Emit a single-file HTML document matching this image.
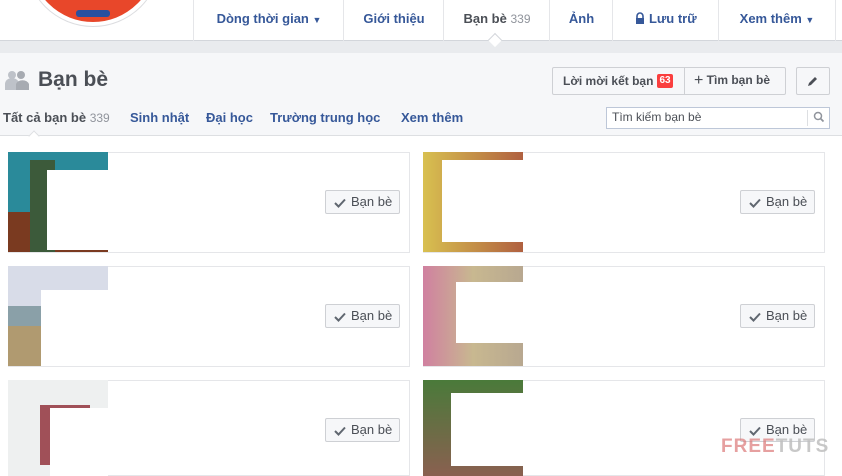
<!DOCTYPE html>
<html><head><meta charset="utf-8"><style>
*{margin:0;padding:0;box-sizing:border-box}
body{width:842px;height:476px;overflow:hidden;background:#fff;font-family:"Liberation Sans",Arial,sans-serif;position:relative}
.a{position:absolute}
.nav{left:0;top:0;width:842px;height:41px;background:#fff;border-bottom:1px solid #d3d6db}
.tab{top:0;height:41px;line-height:38px;font-size:13px;font-weight:bold;color:#365899;text-align:center;border-left:1px solid #e5e6e9}
.band{left:0;top:41px;width:842px;height:12px;background:#e9ebee}
.hdr{left:0;top:53px;width:842px;height:83px;background:#f6f7f9;border-bottom:1px solid #dddfe2}
.sub{top:110px;font-size:13px;font-weight:bold;color:#365899}
.card{width:402px;height:101px;border:1px solid #e5e6e9;background:#fff}
.btn{width:75px;height:24px;border:1px solid #ced0d4;border-radius:2px;background:#f6f7f9;font-size:13px;color:#4b4f56;line-height:22px;padding-left:25px}
.btn svg{position:absolute;left:8px;top:7px}
</style></head><body>
<div class="a nav"></div>
<div class="a" style="left:26px;top:-108px;width:134px;height:134px;border-radius:50%;background:#e8472a;border:4px solid #fff;box-shadow:0 0 0 1px #dcdde0"></div>
<div class="a" style="left:76px;top:10px;width:34px;height:7px;background:#2850a0;border-radius:3px"></div>
<div class="a tab" style="left:193px;width:151px">Dòng thời gian <span style="font-size:9px">▼</span></div>
<div class="a tab" style="left:343px;width:101px">Giới thiệu</div>
<div class="a tab" style="left:443px;width:107px;color:#4b4f56">Bạn bè <span style="font-weight:normal;color:#90949c;font-size:12px">339</span></div>
<div class="a" style="left:490px;top:35px;width:10px;height:10px;background:#fff;border-left:1px solid #d3d6db;border-top:1px solid #d3d6db;transform:rotate(45deg);z-index:2"></div>
<div class="a tab" style="left:549px;width:64px">Ảnh</div>
<div class="a tab" style="left:612px;width:107px"><svg width="10" height="12" viewBox="0 0 10 12" style="vertical-align:-1px"><path d="M2 6V4a3 3 0 0 1 6 0v2" stroke="#365899" stroke-width="1.6" fill="none"/><rect x="1" y="6" width="8" height="6" fill="#365899"/></svg> Lưu trữ</div>
<div class="a tab" style="left:718px;width:118px;border-right:1px solid #e5e6e9">Xem thêm <span style="font-size:9px">▼</span></div>
<div class="a band"></div>
<div class="a hdr"></div>
<svg class="a" style="left:5px;top:70px" width="24" height="20" viewBox="0 0 24 20"><circle cx="7" cy="5" r="4" fill="#bec2c9"/><path d="M0 20v-6a7 6 0 0 1 14 0v6z" fill="#bec2c9"/><circle cx="16" cy="5" r="4" fill="#a7abb2"/><path d="M11 20v-6a7 6 0 0 1 13 0v6z" fill="#a7abb2"/></svg>
<div class="a" style="left:38px;top:68px;font-size:21px;font-weight:bold;color:#4b4f56">Bạn bè</div>
<div class="a" style="left:552px;top:67px;width:234px;height:28px;border:1px solid #ced0d4;border-radius:2px;background:#f6f7f9"></div>
<div class="a" style="left:684px;top:67px;width:1px;height:28px;background:#ced0d4"></div>
<div class="a" style="left:563px;top:74px;font-size:12px;font-weight:bold;color:#4b4f56">Lời mời kết bạn</div>
<div class="a" style="left:657px;top:74px;width:16px;height:14px;background:#fa3e3e;border-radius:2px;color:#fff;font-size:10px;font-weight:bold;text-align:center;line-height:14px">63</div>
<div class="a" style="left:694px;top:72px;font-size:12px;font-weight:bold;color:#4b4f56"><span style="font-size:16px;font-weight:normal;vertical-align:-1px">+</span> Tìm bạn bè</div>
<div class="a" style="left:796px;top:67px;width:34px;height:28px;border:1px solid #ced0d4;border-radius:2px;background:#f6f7f9"></div>
<svg class="a" style="left:807px;top:75px" width="12" height="12" viewBox="0 0 12 12"><path d="M1 11l1-3 6-6 2 2-6 6z" fill="#4b4f56"/></svg>
<div class="a sub" style="left:3px;color:#4b4f56">Tất cả bạn bè <span style="font-weight:normal;color:#90949c;font-size:12px">339</span></div>
<div class="a" style="left:30px;top:132px;width:8px;height:8px;background:#fff;border-left:1px solid #dddfe2;border-top:1px solid #dddfe2;transform:rotate(45deg)"></div>
<div class="a sub" style="left:130px">Sinh nhật</div>
<div class="a sub" style="left:206px">Đại học</div>
<div class="a sub" style="left:270px">Trường trung học</div>
<div class="a sub" style="left:401px">Xem thêm</div>
<div class="a" style="left:606px;top:107px;width:224px;height:22px;border:1px solid #bdc7d8;background:#fff"></div>
<div class="a" style="left:612px;top:110px;font-size:12px;color:#4b4f56">Tìm kiếm bạn bè</div>
<div class="a" style="left:807px;top:110px;width:1px;height:16px;background:#dddfe2"></div>
<svg class="a" style="left:813px;top:111px" width="12" height="12" viewBox="0 0 12 12"><circle cx="5" cy="5" r="3.5" stroke="#90949c" stroke-width="1.5" fill="none"/><path d="M7.5 7.5l3 3" stroke="#90949c" stroke-width="1.8"/></svg>

<div class="a card" style="left:8px;top:152px"></div>
<div class="a" style="left:8px;top:152px;width:100px;height:100px;background:linear-gradient(#2a8a9a 0 60%,#7a3a20 60%)"></div>
<div class="a" style="left:30px;top:160px;width:25px;height:92px;background:#3c5a3a"></div>
<div class="a" style="left:47px;top:170px;width:61px;height:80px;background:#fff"></div>
<div class="a card" style="left:423px;top:152px"></div>
<div class="a" style="left:423px;top:152px;width:100px;height:100px;background:linear-gradient(90deg,#d8c050,#b06040)"></div>
<div class="a" style="left:442px;top:160px;width:81px;height:82px;background:#fff"></div>

<div class="a card" style="left:8px;top:266px"></div>
<div class="a" style="left:8px;top:266px;width:100px;height:100px;background:linear-gradient(#d8dce8 0 40%,#8aa0a8 40% 60%,#b09a70 60%)"></div>
<div class="a" style="left:41px;top:290px;width:67px;height:76px;background:#fff"></div>
<div class="a card" style="left:423px;top:266px"></div>
<div class="a" style="left:423px;top:266px;width:100px;height:100px;background:linear-gradient(90deg,#d080a0,#c8b890 50%,#b8a890)"></div>
<div class="a" style="left:456px;top:282px;width:67px;height:61px;background:#fff"></div>

<div class="a card" style="left:8px;top:380px;height:96px"></div>
<div class="a" style="left:8px;top:380px;width:100px;height:96px;background:#eef0f0"></div>
<div class="a" style="left:40px;top:405px;width:50px;height:60px;background:#a05058"></div>
<div class="a" style="left:50px;top:408px;width:58px;height:68px;background:#fff"></div>
<div class="a card" style="left:423px;top:380px;height:96px"></div>
<div class="a" style="left:423px;top:380px;width:100px;height:96px;background:linear-gradient(#4a7a3a,#8a6050)"></div>
<div class="a" style="left:451px;top:393px;width:72px;height:73px;background:#fff"></div>

<div class="a btn" style="left:325px;top:190px"><svg width="12" height="10" viewBox="0 0 12 10"><path d="M1 5l3.5 3.5L11 1.5" stroke="#606770" stroke-width="2" fill="none"/></svg>Bạn bè</div>
<div class="a btn" style="left:740px;top:190px"><svg width="12" height="10" viewBox="0 0 12 10"><path d="M1 5l3.5 3.5L11 1.5" stroke="#606770" stroke-width="2" fill="none"/></svg>Bạn bè</div>
<div class="a btn" style="left:325px;top:304px"><svg width="12" height="10" viewBox="0 0 12 10"><path d="M1 5l3.5 3.5L11 1.5" stroke="#606770" stroke-width="2" fill="none"/></svg>Bạn bè</div>
<div class="a btn" style="left:740px;top:304px"><svg width="12" height="10" viewBox="0 0 12 10"><path d="M1 5l3.5 3.5L11 1.5" stroke="#606770" stroke-width="2" fill="none"/></svg>Bạn bè</div>
<div class="a btn" style="left:325px;top:418px"><svg width="12" height="10" viewBox="0 0 12 10"><path d="M1 5l3.5 3.5L11 1.5" stroke="#606770" stroke-width="2" fill="none"/></svg>Bạn bè</div>
<div class="a btn" style="left:740px;top:418px"><svg width="12" height="10" viewBox="0 0 12 10"><path d="M1 5l3.5 3.5L11 1.5" stroke="#606770" stroke-width="2" fill="none"/></svg>Bạn bè</div>
<div class="a" style="left:721px;top:436px;font-size:19px;font-weight:bold;letter-spacing:1px;color:rgba(190,190,190,0.85)"><span style="color:rgba(220,120,120,0.7)">FREE</span>TUTS</div>
</body></html>
